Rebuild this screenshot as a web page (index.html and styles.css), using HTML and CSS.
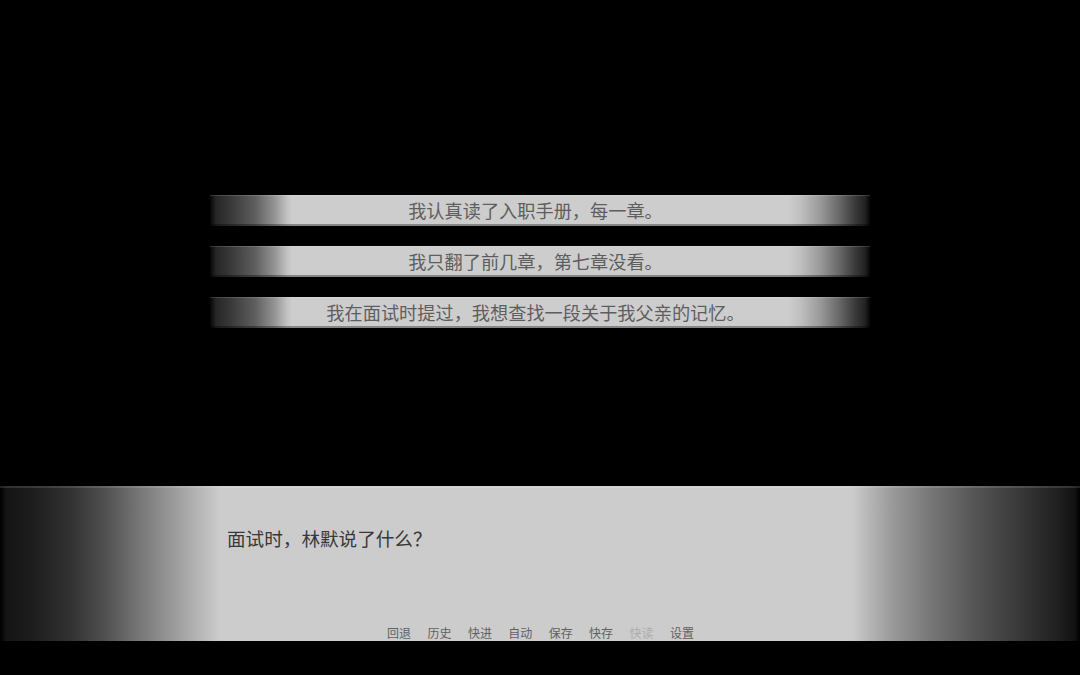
FILE: index.html
```html
<!DOCTYPE html>
<html lang="zh">
<head>
<meta charset="utf-8">
<title>选择</title>
<link rel="stylesheet" href="styles.css">
</head>
<body>
<div class="screen">
  <div class="choices">
    <div class="choice">我认真读了入职手册，每一章。</div>
    <div class="choice">我只翻了前几章，第七章没看。</div>
    <div class="choice">我在面试时提过，我想查找一段关于我父亲的记忆。</div>
  </div>
  <div class="dialog">
    <div class="say">面试时，林默说了什么？</div>
    <div class="menu">
      <span class="item">回退</span>
      <span class="item">历史</span>
      <span class="item">快进</span>
      <span class="item">自动</span>
      <span class="item">保存</span>
      <span class="item">快存</span>
      <span class="item disabled">快读</span>
      <span class="item">设置</span>
    </div>
  </div>
</div>
</body>
</html>
```

FILE: styles.css
```css
html, body {
  margin: 0;
  padding: 0;
  background: #000;
}
body {
  width: 1080px;
  height: 675px;
  overflow: hidden;
  font-family: "Noto Sans CJK SC", "Noto Sans", sans-serif;
}
.screen {
  display: flex;
  flex-direction: column;
  height: 675px;
}
.choices {
  display: flex;
  flex-direction: column;
  gap: 20px;
  padding: 195px 210px 0 210px;
}
.choice {
  height: 31px;
  line-height: 31px;
  text-align: center;
  font-size: 18.2px;
  padding-right: 9px;
  color: #5e5e5e;
  background: linear-gradient(to right,
    #050505 0px, #262626 6px, #383838 20px, #5e5e5e 45px, #959595 65px, #c2c2c2 77px, #cdcdcd 82px,
    #cdcdcd 578px, #c0c0c0 590px, #9a9a9a 610px, #666 630px, #3a3a3a 645px, #222 655px, #050505 660px);
  box-shadow: inset 0 1px 0 rgba(255,255,255,0.15), inset 0 -2px 0 rgba(0,0,0,0.35);
}
.dialog {
  margin-top: 158px;
  height: 155px;
  display: flex;
  flex-direction: column;
  justify-content: space-between;
  background: linear-gradient(to right,
    #000 0px, #141414 6px, #1c1c1c 30px, #313131 70px, #505050 105px, #777 140px, #9c9c9c 175px, #bcbcbc 205px, #cccccc 220px,
    #cccccc 852px, #bfbfbf 862px, #9c9c9c 890px, #777 930px, #555 975px, #383838 1020px, #1e1e1e 1060px, #111 1075px, #000 1080px);
  box-shadow: inset 0 2px 0 rgba(255,255,255,0.12);
}
.say {
  padding: 40px 0 0 227px;
  font-size: 18.6px;
  line-height: 24px;
  color: #383838;
}
.menu {
  display: flex;
  justify-content: center;
  gap: 16.4px;
  font-size: 12px;
  line-height: 16px;
  padding-left: 1px;
}
.item {
  color: #616161;
}
.item.disabled {
  color: #adadad;
}
```
